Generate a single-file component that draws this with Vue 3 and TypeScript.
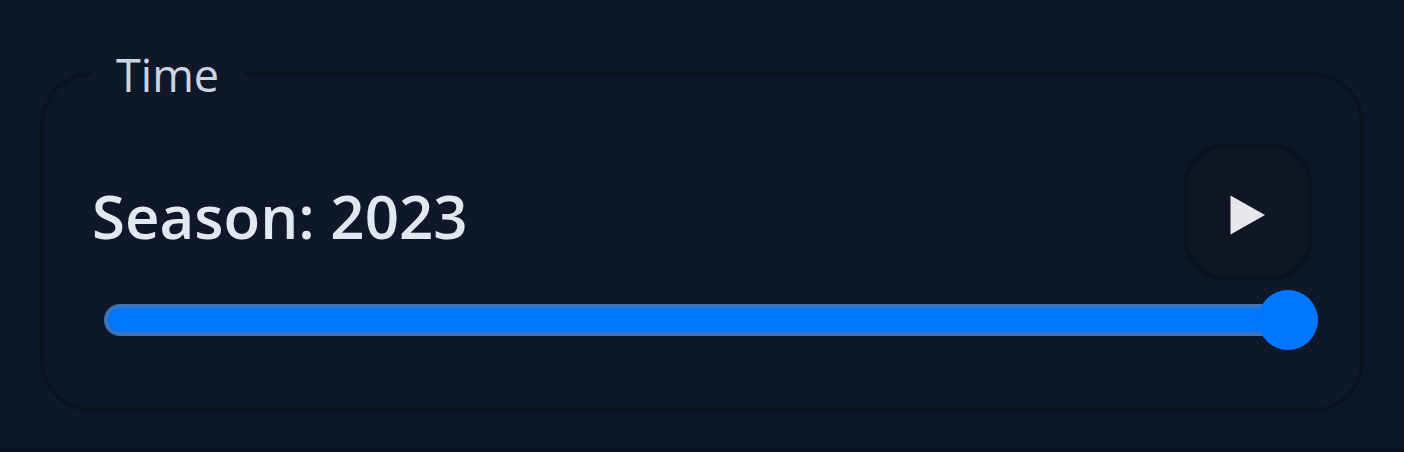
<script setup lang="ts">
import { onBeforeUnmount, ref } from 'vue'

const firstSeason = 2003
const lastSeason = 2023
const season = ref<number>(lastSeason)
const playing = ref<boolean>(false)
let timer: number | undefined

function stop(): void {
  window.clearInterval(timer)
  playing.value = false
}

function togglePlay(): void {
  if (playing.value) {
    stop()
    return
  }
  playing.value = true
  timer = window.setInterval(() => {
    season.value = season.value >= lastSeason ? firstSeason : season.value + 1
  }, 800)
}

onBeforeUnmount(stop)
</script>

<template>
  <main class="panel">
    <fieldset class="group">
      <legend class="legend">Time</legend>
      <div class="row">
        <label class="season" for="season">Season: {{ season }}</label>
        <button
          class="play"
          type="button"
          :aria-label="playing ? 'Pause' : 'Play'"
          :aria-pressed="playing"
          @click="togglePlay"
        >
          <svg class="play-icon" viewBox="0 0 36 40" aria-hidden="true">
            <path v-if="playing" d="M4 2h10v36H4zM22 2h10v36H22z" fill="#e8e8ec" />
            <path v-else d="M0.500 0.500L35 20L0.500 39.500z" fill="#e8e8ec" />
          </svg>
        </button>
      </div>
      <input
        id="season"
        v-model.number="season"
        class="slider"
        type="range"
        :min="firstSeason"
        :max="lastSeason"
      />
    </fieldset>
  </main>
</template>

<style>
html {
  background: #0e1828;
}
</style>

<style scoped>
.panel {
  box-sizing: border-box;
  min-height: 100vh;
  padding: 39px 40px 36px;
  background: #0e1828;
  border-bottom: 4px solid #0b1120;
  font-family: "Segoe UI", "Open Sans", "Noto Sans", sans-serif;
}

.group {
  box-sizing: border-box;
  min-width: 0;
  margin: 0;
  padding: 35px 48px 58px;
  border: 4px solid #0a131e;
  border-radius: 52px;
}

.legend {
  padding: 2px 24px 0;
  color: #cbd5e1;
  font-size: 45px;
  line-height: 68px;
}

.row {
  display: flex;
  align-items: center;
  justify-content: space-between;
}

.season {
  padding-top: 8px;
  color: #e2e8f0;
  font-size: 60px;
  font-weight: 600;
  line-height: 84px;
}

.play {
  box-sizing: border-box;
  display: flex;
  align-items: center;
  justify-content: center;
  width: 128px;
  height: 136px;
  padding: 6px 0 0;
  border: 4px solid #0a131e;
  border-radius: 40px;
  background: #111625;
  cursor: pointer;
}

.play-icon {
  width: 36px;
  height: 40px;
}

.slider {
  appearance: none;
  box-sizing: border-box;
  display: block;
  width: calc(100% + 6px);
  height: 60px;
  margin: 10px 0 0;
  padding: 0 0 0 12px;
  background: transparent;
  cursor: pointer;
}

.slider::-webkit-slider-runnable-track {
  box-sizing: border-box;
  height: 32px;
  border: 4px solid #3b75b8;
  border-right: 0;
  border-radius: 16px;
  background: #0075ff;
}

.slider::-webkit-slider-thumb {
  appearance: none;
  width: 60px;
  height: 60px;
  margin-top: -18px;
  border: 0;
  border-radius: 50%;
  background: #0075ff;
}
</style>
